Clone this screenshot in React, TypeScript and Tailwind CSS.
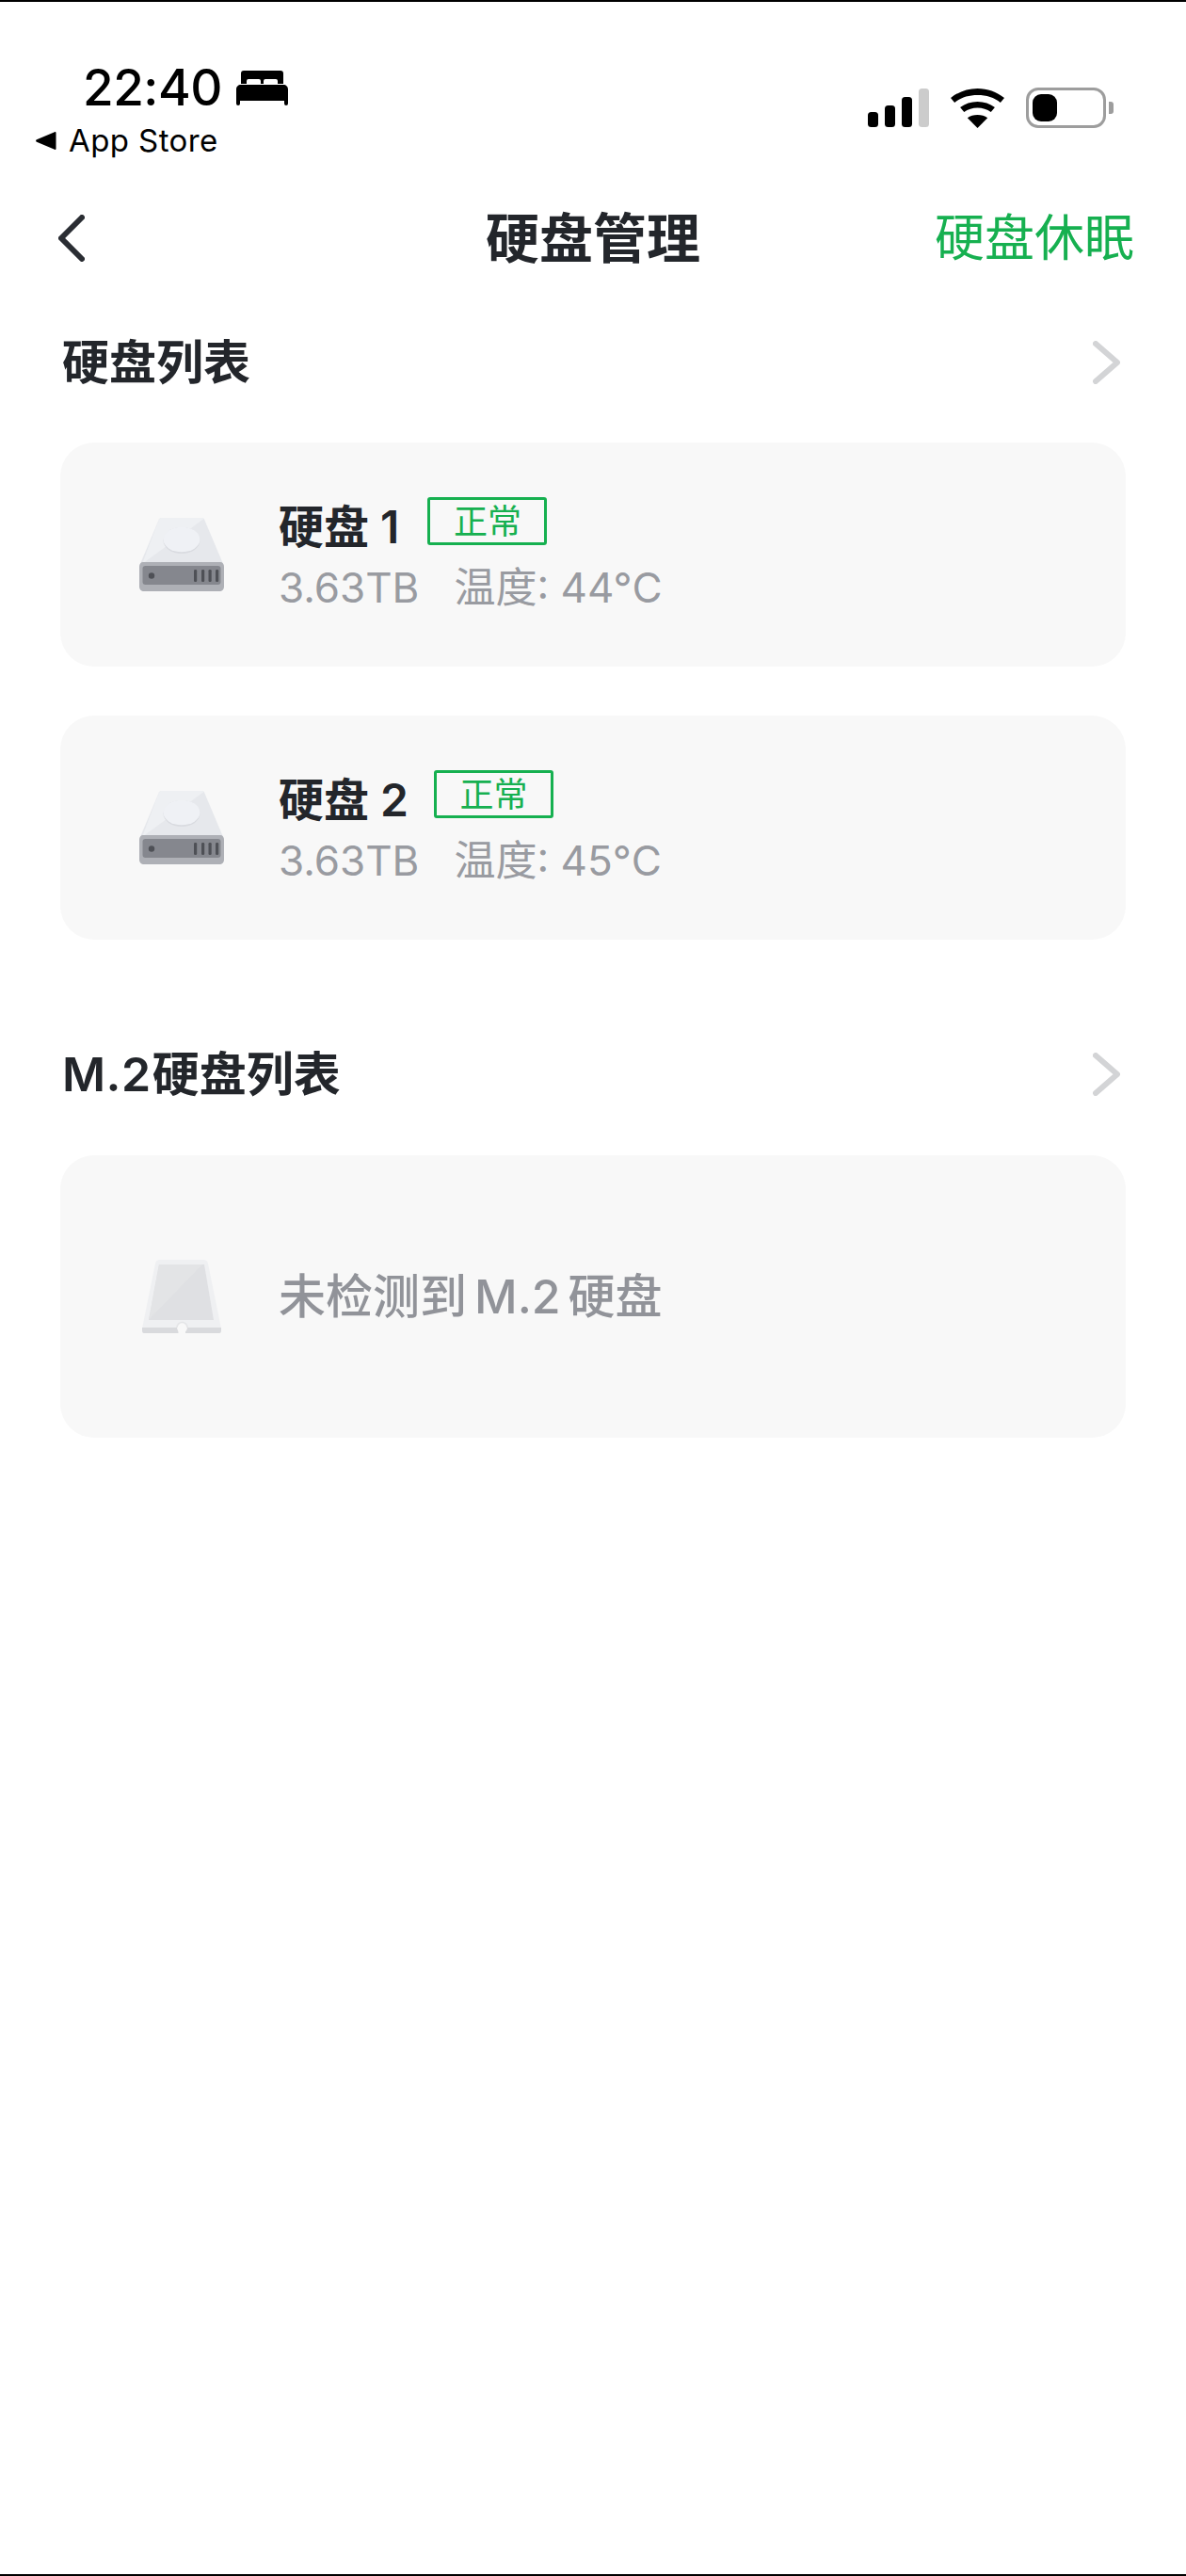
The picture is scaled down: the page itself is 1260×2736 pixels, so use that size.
const font = { fontFamily: 'Inter, "Noto Sans CJK SC", sans-serif' };

function DiskIcon() {
  return (
    <svg width="90" height="78" viewBox="0 0 90 78" className="shrink-0">
      <path d="M21 1.500C21.500.5 23 0 24 0h42c1.200 0 2.500.5 3 1.500L89.500 50H.5z" fill="#e6e8ec" />
      <path d="M24 0h42c1 0 2 .3 2.600 1L3 49 21 1.500C21.500.5 23 0 24 0z" fill="#eef0f3" />
      <ellipse cx="45" cy="24" rx="19.500" ry="14" fill="#d9dbe0" />
      <ellipse cx="45" cy="23" rx="19.500" ry="13.300" fill="#eff1f5" />
      <path d="M0 52c0-3 1.500-5 4-5h82c2.500 0 4 2 4 5v21c0 3-2 5-5 5H5c-3 0-5-2-5-5z" fill="#aeb0b6" />
      <rect x="3.500" y="51" width="83" height="20" rx="3" fill="#85878e" />
      <circle cx="13" cy="61.500" r="3.200" fill="#4e5056" />
      <rect x="58" y="55" width="3.200" height="13" rx="1.200" fill="#4e5056" />
      <rect x="66" y="55" width="3.200" height="13" rx="1.200" fill="#4e5056" />
      <rect x="73.500" y="55" width="3.200" height="13" rx="1.200" fill="#4e5056" />
      <rect x="81" y="55" width="3.200" height="13" rx="1.200" fill="#4e5056" />
    </svg>
  );
}

function M2Icon() {
  return (
    <svg width="84" height="78" viewBox="0 0 84 78" className="shrink-0">
      <path d="M14 4c.5-2.500 2.500-4 5-4h46c2.500 0 4.500 1.500 5 4l14 69H0z" fill="#eff0f2" />
      <path d="M18 5h48l10 59H7z" fill="#dfe0e3" />
      <path d="M18 5h46L7 64z" fill="#e3e4e6" />
      <path d="M0 72h38c.2 0 .5 6 .5 6H2c-1.500 0-2-1-2-3zM46 72h38v3c0 2-.5 3-2 3H46z" fill="#d9dadd" />
      <circle cx="42.500" cy="72" r="5.500" fill="#f8f8f8" />
      <path d="M37 72a5.500 5.500 0 0 1 11 0" fill="none" stroke="#e4e5e7" strokeWidth="1.500" />
    </svg>
  );
}

function Chevron({ dir, color, width, height, stroke }: { dir: 'l' | 'r'; color: string; width: number; height: number; stroke: number }) {
  const s = stroke / 2;
  const d = dir === 'l'
    ? `M${width - s} ${s}L${s} ${height / 2}L${width - s} ${height - s}`
    : `M${s} ${s}L${width - s} ${height / 2}L${s} ${height - s}`;
  return (
    <svg width={width} height={height} viewBox={`0 0 ${width} ${height}`} className="shrink-0">
      <path d={d} fill="none" stroke={color} strokeWidth={stroke} strokeLinecap="round" strokeLinejoin="round" />
    </svg>
  );
}

function Heading({ title, prefix }: { title: string; prefix?: string }) {
  return (
    <div className="flex h-[70px] items-center justify-between pl-[66px] pr-[70px]">
      <span className="text-[50px] font-semibold leading-none text-[#23262b]">
        {prefix && <span className="mr-[1px] tracking-[0.5px]">{prefix}</span>}
        {title}
      </span>
      <Chevron dir="r" color="#d3d4d6" width={29} height={46} stroke={6} />
    </div>
  );
}

function DiskCard({ name, temp, tagGap }: { name: string; temp: string; tagGap: string }) {
  return (
    <div className="mx-[64px] flex h-[238px] items-center rounded-[36px] bg-[#f8f8f8] pl-[84px]">
      <DiskIcon />
      <div className="ml-[58px] flex flex-col">
        <div className="flex items-start">
          <span className="mt-[2px] text-[48px] font-semibold leading-[60px] text-[#23262b]">{name}</span>
          <span className={`${tagGap} flex h-[51px] w-[127px] items-center justify-center rounded-[3px] border-[3px] border-[#16b050] text-[36px] leading-none text-[#16b050]`}>正常</span>
        </div>
        <div className="mt-[8px] flex text-[44px] leading-[52px] text-[#999ba1]">
          <span>3.63TB</span>
          <span className="ml-[37px]">温度: {temp}°C</span>
        </div>
      </div>
    </div>
  );
}

export default function App() {
  return (
    <div className="flex h-[2736px] w-[1260px] flex-col border-y-2 border-black bg-white" style={font}>
      <div className="flex h-[203px] shrink-0 items-start justify-between">
        <div className="flex flex-col pl-[38px] pt-[64px]">
          <div className="flex items-center pl-[50px]">
            <span className="text-[53px] font-medium leading-[54px] tracking-[-0.5px] text-black">22:40</span>
            <svg width="55" height="37" viewBox="0 0 55 37" className="ml-[15px]">
              <path d="M8 0h39c2 0 3 1 3 3v11h-6v-3a2 2 0 0 0-2-2H31a2 2 0 0 0-2 2v3h-3v-3a2 2 0 0 0-2-2H13a2 2 0 0 0-2 2v3H5V3c0-2 1-3 3-3z" fill="#000" />
              <path d="M5 15h45c3 0 5 2 5 5v15a2 2 0 0 1-4 0v-3H4v3a2 2 0 0 1-4 0V20c0-3 2-5 5-5z" fill="#000" />
            </svg>
          </div>
          <div className="mt-[7px] flex items-center">
            <svg width="22" height="19" viewBox="0 0 22 19"><path d="M21.500 1c0-1-.8-1.200-1.500-.8L1 8.300c-1.200.6-1.200 1.800 0 2.400l19 8.100c.7.400 1.500.2 1.500-.8z" fill="#000" /></svg>
            <span className="ml-[13px] text-[33px] leading-[44px] tracking-[0.4px] text-black">App Store</span>
          </div>
        </div>
        <div className="flex items-center pr-[77px] pt-[91px]">
          <svg width="65" height="41" viewBox="0 0 65 41">
            <rect x="0" y="25" width="11" height="16" rx="3.500" fill="#000" />
            <rect x="18" y="18" width="11" height="23" rx="3.500" fill="#000" />
            <rect x="36" y="9" width="11" height="32" rx="3.500" fill="#000" />
            <rect x="54" y="0" width="11" height="41" rx="3.500" fill="#cccccc" />
          </svg>
          <svg width="57" height="42" viewBox="0 0 48 42" preserveAspectRatio="none" className="ml-[23px]">
            <path d="M24 0c9 0 17 3.500 24 10l-3.500 5C39 9.500 32 7 24 7S9 9.500 3.500 15L0 10C7 3.500 15 0 24 0z" fill="#000" />
            <path d="M24 14c6 0 11 2 15.500 6l-3.500 5c-3.500-3-7.500-4.500-12-4.500S15.500 22 12 25l-3.500-5C13 16 18 14 24 14z" fill="#000" />
            <path d="M24 28c3.500 0 6.500 1 9 3.200L24 42l-9-10.800c2.500-2.200 5.500-3.200 9-3.200z" fill="#000" />
          </svg>
          <div className="ml-[23px] flex items-center">
            <div className="flex h-[43px] w-[85px] items-center rounded-[13px] border-[3px] border-[#9d9d9d] pl-[4px]">
              <div className="h-[29px] w-[26px] rounded-[9px] bg-black" />
            </div>
            <div className="ml-[3px] h-[13px] w-[5px] rounded-r-[3px] bg-[#9d9d9d]" />
          </div>
        </div>
      </div>

      <div className="flex h-[96px] shrink-0 items-center justify-between pl-[62px] pr-[54px]">
        <div className="w-[205px]">
          <Chevron dir="l" color="#2a2d33" width={28} height={50} stroke={6} />
        </div>
        <span className="text-[57px] font-semibold leading-none text-[#23262b]">硬盘管理</span>
        <span className="w-[213px] whitespace-nowrap text-[53px] leading-none text-[#16b050]">硬盘休眠</span>
      </div>

      <div className="mt-[49px]">
        <Heading title="硬盘列表" />
      </div>
      <div className="mt-[50px] flex flex-col gap-[52px]">
        <DiskCard name="硬盘 1" temp="44" tagGap="ml-[30px]" />
        <DiskCard name="硬盘 2" temp="45" tagGap="ml-[27px]" />
      </div>

      <div className="mt-[108px]">
        <Heading prefix="M.2" title="硬盘列表" />
      </div>
      <div className="mx-[64px] mt-[51px] flex h-[300px] items-center rounded-[36px] bg-[#f8f8f8] pl-[87px]">
        <M2Icon />
        <span className="ml-[61px] whitespace-nowrap text-[50px] font-medium leading-none text-[#919399]">未检测到<span className="mx-[8px]">M.2</span>硬盘</span>
      </div>
    </div>
  );
}
